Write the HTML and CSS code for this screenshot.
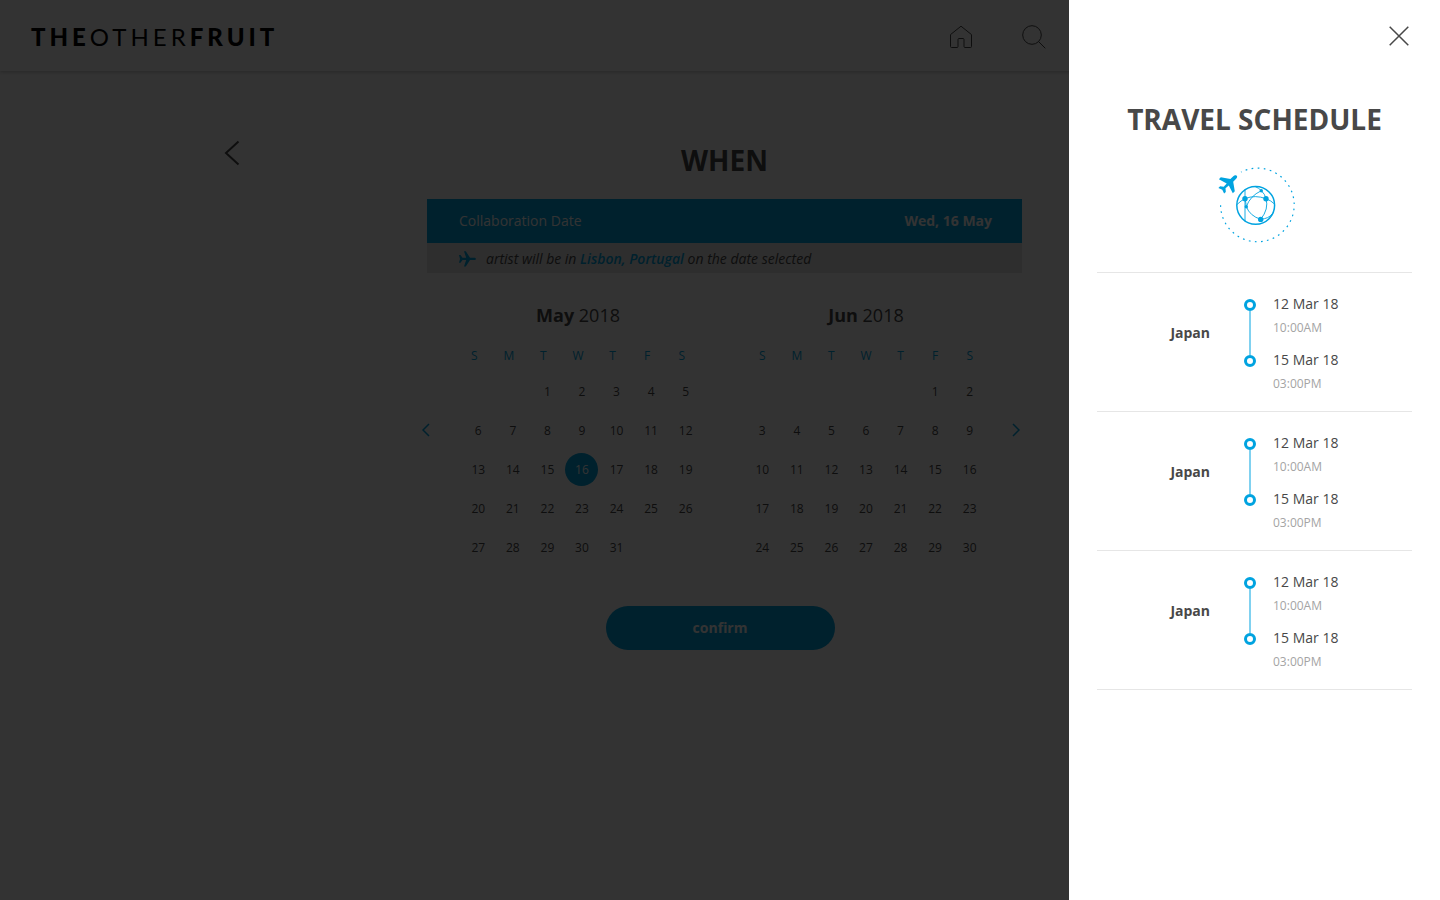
FILE: index.html
```html
<!DOCTYPE html>
<html lang="en">
<head>
<meta charset="utf-8">
<title>The Other Fruit</title>
<link rel="stylesheet" href="styles.css">
</head>
<body>
<header class="topbar">
  <a class="logo" href="#"><b>THE</b>OTHER<b>FRUIT</b></a>
  <nav class="topnav">
    <a class="topnav-link" href="#" aria-label="Home">
      <svg class="icon" width="24" height="24" viewBox="0 0 24 24"><path d="M1.500 9.600 12 1.200 22.500 9.600V21.500a1 1 0 0 1-1 1H16a1 1 0 0 1-1-1V14.500a1 1 0 0 0-1-1H10a1 1 0 0 0-1 1V21.500a1 1 0 0 1-1 1H2.500a1 1 0 0 1-1-1Z"/></svg>
    </a>
    <a class="topnav-link" href="#" aria-label="Search">
      <svg class="icon" width="24" height="24" viewBox="0 0 24 24"><circle cx="10" cy="10" r="9.300"/><path d="M16.500 16.500 23.300 23.300"/></svg>
    </a>
  </nav>
</header>

<main class="main">
  <button class="back" type="button" aria-label="Back">
    <svg class="icon icon-bold" width="16" height="26" viewBox="0 0 16 26"><path d="M14.500 1.500 2 13 14.500 24.500"/></svg>
  </button>
  <div class="content">
    <section class="summary">
      <h1 class="title">WHEN</h1>
      <div class="collab">
        <span>Collaboration Date</span>
        <strong>Wed, 16 May</strong>
      </div>
      <p class="note">
        <svg class="plane" width="17" height="16" viewBox="0 0 17 16"><path d="M0 4h1.500l2 2.700h3.700L5 .3h1.800l4.200 6.400h4.200c1 0 1.700.6 1.700 1.200s-.7 1.200-1.700 1.200H11l-4.200 6.500H5l2.200-6.500H3.500l-2 2.700H0l1-3.900z"/></svg>
        <span>artist will be in <b class="place">Lisbon, Portugal</b> on the date selected</span>
      </p>
    </section>

    <section class="calendar">
      <button class="step step-prev" type="button" aria-label="Previous month"><svg class="icon icon-step" width="8" height="14" viewBox="0 0 8 14"><path d="M7 1 1 7l6 6"/></svg></button>
      <div class="months">
        <table class="month month-left">
          <caption><b>May</b> 2018</caption>
          <thead><tr><th>S</th><th>M</th><th>T</th><th>W</th><th>T</th><th>F</th><th>S</th></tr></thead>
          <tbody>
            <tr><td></td><td></td><td>1</td><td>2</td><td>3</td><td>4</td><td>5</td></tr>
            <tr><td>6</td><td>7</td><td>8</td><td>9</td><td>10</td><td>11</td><td>12</td></tr>
            <tr><td>13</td><td>14</td><td>15</td><td><span class="selected">16</span></td><td>17</td><td>18</td><td>19</td></tr>
            <tr><td>20</td><td>21</td><td>22</td><td>23</td><td>24</td><td>25</td><td>26</td></tr>
            <tr><td>27</td><td>28</td><td>29</td><td>30</td><td>31</td><td></td><td></td></tr>
          </tbody>
        </table>
        <table class="month">
          <caption><b>Jun</b> 2018</caption>
          <thead><tr><th>S</th><th>M</th><th>T</th><th>W</th><th>T</th><th>F</th><th>S</th></tr></thead>
          <tbody>
            <tr><td></td><td></td><td></td><td></td><td></td><td>1</td><td>2</td></tr>
            <tr><td>3</td><td>4</td><td>5</td><td>6</td><td>7</td><td>8</td><td>9</td></tr>
            <tr><td>10</td><td>11</td><td>12</td><td>13</td><td>14</td><td>15</td><td>16</td></tr>
            <tr><td>17</td><td>18</td><td>19</td><td>20</td><td>21</td><td>22</td><td>23</td></tr>
            <tr><td>24</td><td>25</td><td>26</td><td>27</td><td>28</td><td>29</td><td>30</td></tr>
          </tbody>
        </table>
      </div>
      <button class="step step-next" type="button" aria-label="Next month"><svg class="icon icon-step" width="8" height="14" viewBox="0 0 8 14"><path d="M1 1l6 6-6 6"/></svg></button>
    </section>

    <button class="confirm" type="button">confirm</button>
  </div>
</main>

<div class="backdrop"></div>

<aside class="drawer">
  <button class="close" type="button" aria-label="Close">
    <svg class="icon icon-close" width="20" height="20" viewBox="0 0 20 20"><path d="M.7.700 19.300 19.300M19.300.7.700 19.300"/></svg>
  </button>
  <h2 class="title drawer-title">TRAVEL SCHEDULE</h2>
  <svg class="globe" width="78" height="78" viewBox="19 16 78 78">
    <g fill="none" stroke="#00a3e0">
      <path d="M21.600 55.200A36.800 36.800 0 1 0 42 22" stroke-width="1.200" stroke-dasharray="1.700 4.400"/>
      <circle cx="56.700" cy="55.300" r="18.900" stroke-width="1.500"/>
      <path stroke-width=".9" d="M46 39.500V71.500M38 54.500Q42 50.500 46 48.700Q56 44.500 67 48.700Q72 50.500 75.500 54M46 48.700 Q47 53 47.300 56.700M56 36.500Q60 38 62.300 40.700Q66 44 67 48.700Q70 59 61.700 69.300M62.300 40.700Q51 46 47.300 56.700Q51 66 61.700 69.300Q70 68.500 73 64"/>
    </g>
    <g fill="#00a3e0">
      <circle cx="46" cy="48.700" r="2.700"/><circle cx="67" cy="48.700" r="2.700"/><circle cx="61.700" cy="69.400" r="2.700"/><circle cx="62.300" cy="40.700" r="1.700"/><circle cx="47.300" cy="56.700" r="1.700"/>
      <path d="M37.300 25.500c-.7-.7-2-.3-3 .7l-2.900 2.900-9.600-1.900-1.900 2 7.800 4.200-3 3.300-3.600-.4-1.700 1.700 3.900 1.700 1.800 3.900 1.700-1.700-.3-3.600 3.300-2.900 4 7.900 2-2-1.600-9.600 2.900-2.900c1-1 1.400-2.300.7-3z"/>
    </g>
  </svg>
  <ol class="trips">
    <li class="trip">
      <div class="trip-route"><strong class="trip-place">Japan</strong><span class="rail"></span></div>
      <div class="trip-times"><p class="stop"><span>12 Mar 18</span><small>10:00AM</small></p><p class="stop"><span>15 Mar 18</span><small>03:00PM</small></p></div>
    </li>
    <li class="trip">
      <div class="trip-route"><strong class="trip-place">Japan</strong><span class="rail"></span></div>
      <div class="trip-times"><p class="stop"><span>12 Mar 18</span><small>10:00AM</small></p><p class="stop"><span>15 Mar 18</span><small>03:00PM</small></p></div>
    </li>
    <li class="trip">
      <div class="trip-route"><strong class="trip-place">Japan</strong><span class="rail"></span></div>
      <div class="trip-times"><p class="stop"><span>12 Mar 18</span><small>10:00AM</small></p><p class="stop"><span>15 Mar 18</span><small>03:00PM</small></p></div>
    </li>
  </ol>
</aside>
</body>
</html>
```

FILE: styles.css
```css
:root {
  --blue: #00a3e0;
  --ink: #484848;
  --line: #e6e6e6;
  --drawer: 371px;
}

*, *::before, *::after { box-sizing: border-box; }

body {
  margin: 0;
  min-height: 100vh;
  background: #fff;
  color: var(--ink);
  font-family: "Open Sans", "Noto Sans", sans-serif;
  font-size: 14px;
  line-height: 24px;
}

button {
  padding: 0;
  border: 0;
  background: none;
  color: inherit;
  font: inherit;
  cursor: pointer;
}

svg { display: block; }

.icon { fill: none; stroke: currentColor; stroke-width: 1; }
.icon-bold { stroke-width: 2; }
.icon-close, .icon-step { stroke-width: 1.5; }

.topbar {
  display: flex;
  align-items: center;
  justify-content: space-between;
  height: 71px;
  padding: 2px calc(var(--drawer) + 23px) 0 31px;
  box-shadow: 0 1px 4px rgba(0, 0, 0, .25);
}

.logo {
  color: #000;
  font-family: Lato, sans-serif;
  font-size: 24px;
  letter-spacing: 4px;
  text-decoration: none;
}
.logo b { font-weight: 900; }

.topnav { display: flex; gap: 49px; }
.topnav-link { color: var(--ink); }

.main {
  display: grid;
  grid-template-columns: 1fr minmax(0, 604px) 1fr;
  max-width: 1000px;
  margin: 0 auto;
  padding-top: 69px;
}

.back { justify-self: start; align-self: start; margin-left: 4px; }

.content { display: flex; flex-direction: column; align-items: center; }

.summary { align-self: stretch; padding-left: 9px; }

.title {
  margin: 0;
  font-size: 28px;
  line-height: 40px;
  font-weight: 700;
  text-align: center;
}

.summary .title { margin-bottom: 19px; }

.collab {
  display: flex;
  align-items: center;
  justify-content: space-between;
  height: 44px;
  padding: 0 30px 0 32px;
  background: var(--blue);
  color: #fff;
}

.note {
  display: flex;
  align-items: center;
  gap: 10px;
  margin: 0;
  padding: 4px 32px 2px;
  background: var(--line);
  font-style: italic;
}
.plane { fill: var(--blue); }
.place { color: var(--blue); font-weight: 600; }

.calendar {
  display: flex;
  align-items: center;
  align-self: stretch;
  margin-top: 30px;
}
.step { flex: none; padding-bottom: 10px; color: var(--blue); }
.step-prev { width: 43px; padding-left: 4px; }
.step-next { display: flex; justify-content: flex-end; width: 35px; padding-right: 2px; }

.months {
  display: grid;
  flex: 1;
  grid-template-columns: 1fr 1fr;
  gap: 42px;
}
.month {
  width: 100%;
  table-layout: fixed;
  border-collapse: collapse;
  font-size: 12px;
  text-align: center;
}
.month caption { padding-bottom: 13px; font-size: 18px; }
.month th { height: 32px; padding: 0; color: var(--blue); font-weight: 400; }
.month td { height: 39px; padding: 0; }
.month-left caption, .month-left th { padding-right: 8px; }

.selected {
  display: block;
  width: 33px;
  margin: 0 auto;
  border-radius: 50%;
  background: var(--blue);
  color: #fff;
  line-height: 33px;
}

.confirm {
  width: 229px;
  height: 44px;
  margin-top: 39px;
  border-radius: 22px;
  background: var(--blue);
  color: #fff;
  font-weight: 700;
}

.backdrop { position: fixed; inset: 0; background: rgba(0, 0, 0, .8); }

.drawer {
  position: fixed;
  inset: 0 0 0 auto;
  display: flex;
  flex-direction: column;
  width: var(--drawer);
  max-width: 100%;
  padding: 26px 28px;
  overflow: auto;
  background: #fff;
}
.close { align-self: flex-end; margin-right: 3px; }
.drawer-title { margin-top: 53px; }
.globe { align-self: center; flex: none; margin: 27px 0 28px 5px; }

.trips {
  margin: 0;
  padding: 0;
  border-bottom: 1px solid var(--line);
  list-style: none;
}
.trip {
  display: flex;
  gap: 17px;
  padding: 19px 0 15px;
  border-top: 1px solid var(--line);
}
.trip-route {
  display: flex;
  flex: none;
  align-items: center;
  align-self: flex-start;
  gap: 34px;
  margin-top: 7px;
}
.trip-place { width: 113px; text-align: right; }

.rail {
  display: flex;
  flex-direction: column;
  align-items: center;
  justify-content: space-between;
  width: 12px;
  height: 68px;
  background: linear-gradient(#80d1f0, #80d1f0) center / 2px 44px no-repeat;
}
.rail::before, .rail::after {
  content: "";
  width: 12px;
  height: 12px;
  border: 3px solid var(--blue);
  border-radius: 50%;
}

.trip-times { display: flex; flex-direction: column; gap: 8px; }
.stop { display: flex; flex-direction: column; margin: 0; }
.stop small { color: #a4a4a4; font-size: 12px; }
```
